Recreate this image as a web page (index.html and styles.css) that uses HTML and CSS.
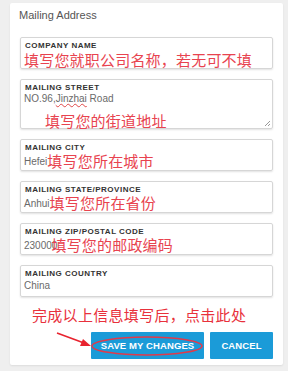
FILE: index.html
```html
<!DOCTYPE html>
<html>
<head>
    <title>Mailing Address</title>
    <link rel="stylesheet" href="styles.css">
</head>
<body>
    <div class="card">
        <h2 class="title">Mailing Address</h2>
        <div class="fields">
            <div class="field">
                <div class="label">COMPANY NAME</div>
                <div class="note-block">填写您就职公司名称，若无可不填</div>
            </div>
            <div class="field street">
                <div class="label">MAILING STREET</div>
                <div class="value">NO.96,<span class="typo">Jinzhai</span> Road</div>
                <div class="note-block indent">填写您的街道地址</div>
                <svg class="grip" width="7" height="7" viewBox="0 0 7 7">
                    <path d="M6 1L1 6M6 4L4 6" stroke="#999" stroke-width="1"/>
                </svg>
            </div>
            <div class="field">
                <div class="label">MAILING CITY</div>
                <div class="value">Hefei<span class="note">填写您所在城市</span></div>
            </div>
            <div class="field">
                <div class="label">MAILING STATE/PROVINCE</div>
                <div class="value">Anhui<span class="note">填写您所在省份</span></div>
            </div>
            <div class="field">
                <div class="label">MAILING ZIP/POSTAL CODE</div>
                <div class="value">230000<span class="note overlap">填写您的邮政编码</span></div>
            </div>
            <div class="field">
                <div class="label">MAILING COUNTRY</div>
                <div class="value">China</div>
            </div>
        </div>
        <div class="hint">完成以上信息填写后，点击此处</div>
        <div class="actions">
            <svg class="arrow" width="40" height="20" viewBox="0 0 40 20">
                <path d="M1 1L28 11" stroke="#e8232f" stroke-width="1.6"/>
                <path d="M35 14L24 14L27 7Z" fill="#e8232f"/>
            </svg>
            <button class="btn save">SAVE MY CHANGES
                <svg class="ring" width="113" height="22" viewBox="0 0 113 22">
                    <ellipse cx="56" cy="11" rx="55" ry="9" fill="none" stroke="#e23a4a" stroke-width="1.5"/>
                </svg>
            </button>
            <button class="btn cancel">CANCEL</button>
        </div>
    </div>
</body>
</html>
```

FILE: styles.css
```css
body {
    margin: 0;
    padding: 3px 5px 6px 10px;
    background-color: #efefef;
    font-family: "Liberation Sans", Arial, sans-serif;
}

.card {
    width: 273px;
    height: 362px;
    box-sizing: border-box;
    background-color: #fff;
    padding: 5px 10px 9px 10px;
    border-radius: 2px;
    box-shadow: 0 1px 2px rgba(0, 0, 0, 0.08);
}

.title {
    margin: 0 0 15px -1px;
    font-size: 11px;
    line-height: 14px;
    font-weight: normal;
    color: #555;
}

.fields {
    display: flex;
    flex-direction: column;
    gap: 10px;
}

.field {
    position: relative;
    height: 32px;
    box-sizing: border-box;
    border: 1px solid #d6d6d6;
    border-radius: 2px;
    padding: 3px 3px 0 3px;
    box-shadow: 0 1px 2px rgba(0, 0, 0, 0.12);
}

.field.street {
    height: 50px;
}

.label {
    padding-left: 1px;
    font-size: 8px;
    line-height: 10px;
    font-weight: bold;
    letter-spacing: 0.5px;
    color: #333;
}

.value {
    font-size: 10px;
    line-height: 14px;
    color: #6a6a6a;
    white-space: nowrap;
}

.street .value {
    line-height: 12px;
}

.typo {
    text-decoration: underline wavy #e04848;
    text-decoration-thickness: 1px;
}

.note,
.note-block,
.hint {
    font-family: "Noto Sans CJK SC", sans-serif;
    color: #e8434f;
    font-size: 15px;
    line-height: 15px;
    letter-spacing: 0.2px;
}

.note {
    vertical-align: -2px;
}

.note.overlap {
    margin-left: -6px;
}

.note-block {
    margin-top: 1px;
}

.note-block.indent {
    margin-top: 8px;
    padding-left: 21px;
}

.grip {
    position: absolute;
    right: 1px;
    bottom: 1px;
}

.hint {
    margin: 8px 0 0 12px;
    height: 20px;
    line-height: 20px;
    letter-spacing: 0.3px;
    color: #e8313c;
}

.actions {
    position: relative;
    display: flex;
    justify-content: flex-end;
    gap: 6px;
    margin-top: 7px;
}

.btn {
    position: relative;
    height: 27px;
    border: none;
    border-radius: 1px;
    background-color: #1b9bd8;
    color: #fff;
    font-family: "Liberation Sans", Arial, sans-serif;
    font-size: 9.5px;
    font-weight: bold;
    letter-spacing: 0.1px;
    padding: 0;
}

.save {
    width: 113px;
}

.cancel {
    width: 63px;
}

.ring {
    position: absolute;
    left: 0;
    top: 3px;
}

.arrow {
    position: absolute;
    left: 36px;
    top: 0;
}
```
